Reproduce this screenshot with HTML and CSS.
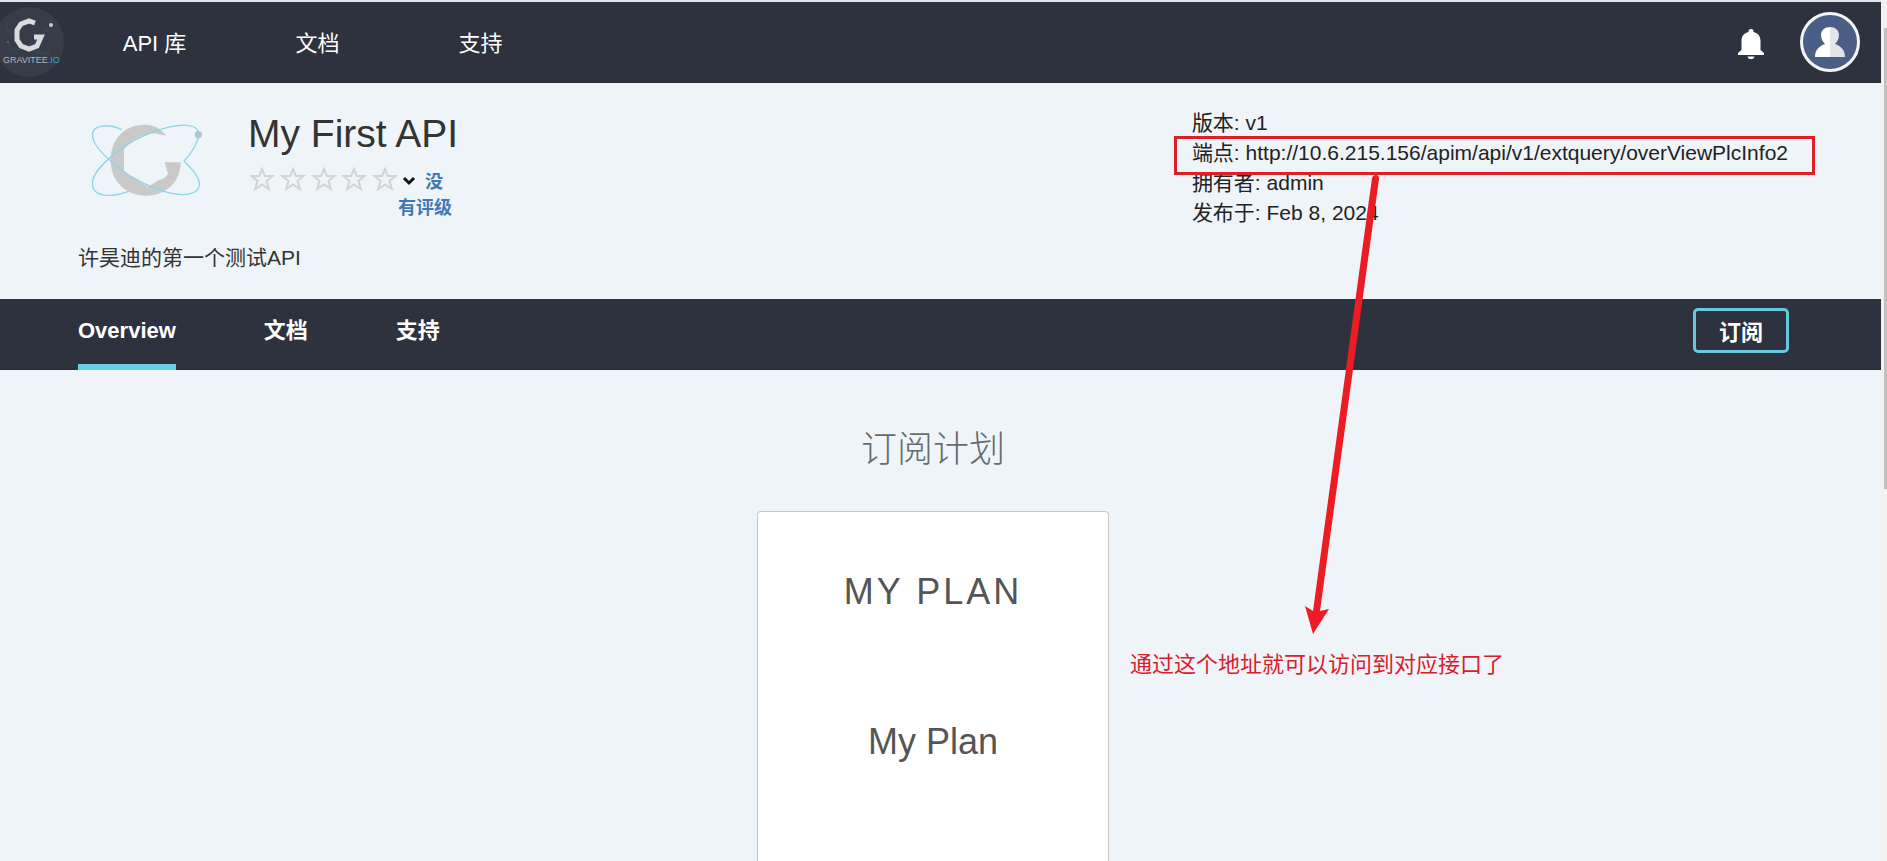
FILE: index.html
```html
<!DOCTYPE html>
<html lang="zh-CN">
<head>
    <meta charset="UTF-8">
    <meta name="viewport" content="width=device-width, initial-scale=1.0">
    <title>My First API</title>
    <link rel="stylesheet" href="styles.css">
</head>
<body>
    <div class="page">
        <header class="topbar">
            <a href="#" class="brand" aria-label="Gravitee.io">
                <svg width="66" height="72" viewBox="0 0 66 72">
                    <circle cx="29" cy="36" r="35" fill="#373c48"/>
                    <path d="M9 16C2 16 8 27 20 36S48 52 49 43M49 14C56 18 42 30 30 38S8 46 9 38" fill="none" stroke="#35525f"/>
                    <path d="M35 17L29 15L21 18L17 24V34L21 40L29 43L37 40L41 31H34" fill="none" stroke="#d9dbde" stroke-width="5"/>
                    <circle cx="51" cy="19" r="2" fill="#c9ccd1"/>
                    <circle cx="8" cy="36" r="1" fill="#4c7180"/>
                    <text class="brand-text" x="3" y="57">GRAVITEE<tspan class="brand-io">.IO</tspan></text>
                </svg>
            </a>
            <nav class="main-nav">
                <a href="#">API 库</a>
                <a href="#">文档</a>
                <a href="#">支持</a>
            </nav>
            <div class="user-tools">
                <button class="icon-button" aria-label="通知">
                    <svg width="26" height="30" viewBox="0 0 26 30" fill="#fff">
                        <path d="M13 0C11 0 10.500 1 10.500 3C6 4 3.500 7 3.500 12V21L0 24V26H26V24L22.500 21V12C22.500 7 20 4 15.500 3C15.500 1 15 0 13 0Z"/>
                        <path d="M9.500 27.500H16.500C16 29.500 15 30 13 30S10 29.500 9.500 27.500Z"/>
                    </svg>
                </button>
                <button class="icon-button" aria-label="用户">
                    <svg width="60" height="60" viewBox="0 0 60 60">
                        <circle cx="30" cy="30" r="28.500" fill="#4b5f86" stroke="#f3f5f8" stroke-width="3"/>
                        <path d="M30 15C25 15 21 18 21 23C21 27 23 30 25 32C19 34 15 38 15 45H30Z" fill="#fff"/>
                        <path d="M30 15C35 15 39 18 39 23C39 27 37 30 35 32C41 34 45 38 45 45H30Z" fill="#e3e5e8"/>
                    </svg>
                </button>
            </div>
        </header>

        <section class="api-header">
            <div class="api-intro">
                <div class="api-summary">
                    <svg class="api-logo" width="113" height="75" viewBox="90 70 339 225">
                        <path d="M318 108C302 85 282 75 255 75C190 75 152 122 152 182C152 243 195 288 258 288C320 288 362 245 362 188H314L324 222Q318 236 298 240L264 261L192 218V148C210 125 245 103 285 101Z" fill="#c9c9c9"/>
                        <circle cx="415" cy="105" r="11" fill="#bfc3c6"/>
                        <path d="M205 275C150 296 92 292 98 245C103 205 190 132 260 105C330 74 402 65 415 95C424 115 392 165 372 184" fill="none" stroke="#8ad6ea" stroke-width="4"/>
                        <path d="M185 90C145 70 92 75 98 112C103 150 190 225 260 255C320 285 402 300 417 262C425 235 390 202 372 184" fill="none" stroke="#8ad6ea" stroke-width="4"/>
                    </svg>
                    <div>
                        <h1>My First API</h1>
                        <div class="rating">
                            <svg width="148" height="25" viewBox="0 0 148 25" fill="none" stroke="#d3d3d3" stroke-width="2">
                                <defs>
                                    <path id="star" d="M12 2L14.800 9H22.500L16.500 14L18.800 22L12 17.500L5.200 22L7.500 14L1.500 9H9.200Z"/>
                                </defs>
                                <use href="#star"/>
                                <use href="#star" x="31"/>
                                <use href="#star" x="62"/>
                                <use href="#star" x="92"/>
                                <use href="#star" x="123"/>
                            </svg>
                            <a href="#" class="rating-link">
                                <svg class="chevron" width="22" height="16" viewBox="0 0 22 16"><path d="M6 3L11 8L16 3" fill="none" stroke="#111" stroke-width="3"/></svg>
                                没有评级
                            </a>
                        </div>
                    </div>
                </div>
                <p class="description">许昊迪的第一个测试API</p>
            </div>

            <div class="api-info">
                <div>版本: v1</div>
                <div>端点: http://10.6.215.156/apim/api/v1/extquery/overViewPlcInfo2</div>
                <div>拥有者: admin</div>
                <div>发布于: Feb 8, 2024</div>

                <!-- 标注 -->
                <div class="mark-box"></div>
                <svg class="mark-arrow" width="80" height="464" viewBox="0 0 80 464">
                    <path d="M72 5Q73 2 76 2T79 6L20 438L29 436L13 461L5 433L13 438Z" fill="#ec1c24"/>
                </svg>
                <div class="mark-note">通过这个地址就可以访问到对应接口了</div>
            </div>
        </section>

        <div class="tabs">
            <nav class="tab-list">
                <a href="#" class="active">Overview</a>
                <a href="#">文档</a>
                <a href="#">支持</a>
            </nav>
            <button class="subscribe">订阅</button>
        </div>

        <main class="plans">
            <h2>订阅计划</h2>
            <div class="plan-card">
                <h3>My Plan</h3>
                <p>My Plan</p>
            </div>
        </main>
    </div>
    <div class="scrollbar"><div class="thumb"></div></div>
</body>
</html>
```
FILE: styles.css
```css
* {
    box-sizing: border-box;
}

body {
    margin: 0;
    height: 100vh;
    display: flex;
    overflow: hidden;
    font-family: "Liberation Sans", "Noto Sans CJK SC", sans-serif;
    font-size: 21px;
    color: #333;
    background: #eff4f9;
}

h1, h2, h3, p {
    margin: 0;
    font-weight: normal;
}

a {
    text-decoration: none;
}

button {
    font-family: inherit;
    cursor: pointer;
}

svg {
    flex: none;
}

.page {
    flex: 1;
    display: flex;
    flex-direction: column;
    border-top: 2px solid #e3e6ea;
}

/* 顶部导航 */
.topbar {
    flex: none;
    height: 81px;
    padding-bottom: 2px;
    display: flex;
    align-items: center;
    background: #2d323e;
}

.brand {
    width: 73px;
}

.brand svg {
    display: block;
}

.brand-text {
    font-size: 9px;
    fill: #b4b7bd;
}

.brand-io {
    fill: #3aa7c4;
}

.main-nav {
    display: flex;
    padding-bottom: 2px;
}

.main-nav a {
    width: 163px;
    text-align: center;
    font-size: 22px;
    color: #fff;
}

.user-tools {
    margin-left: auto;
    padding-right: 21px;
    display: flex;
    align-items: center;
    gap: 36px;
}

.icon-button {
    padding: 0;
    border: none;
    background: none;
    display: flex;
}

.icon-button:first-child {
    padding-top: 4px;
}

/* API 信息 */
.api-header {
    flex: none;
    height: 216px;
    padding: 25px 93px 0 78px;
    display: flex;
    justify-content: space-between;
}

.api-summary {
    display: flex;
    height: 120px;
}

.api-logo {
    margin: 15px 45px 0 12px;
}

h1 {
    font-size: 39px;
    line-height: 52px;
}

.rating {
    display: flex;
    padding: 7px 0 0 2px;
}

.rating-link {
    width: 60px;
    margin-top: 2px;
    font-size: 18px;
    font-weight: bold;
    line-height: 26px;
    color: #3f78b8;
}

.chevron {
    vertical-align: middle;
}

.description {
    margin-top: 15px;
    line-height: 30px;
}

.api-info {
    position: relative;
    line-height: 30px;
    color: #222;
    white-space: nowrap;
}

.mark-box {
    position: absolute;
    top: 28px;
    left: -18px;
    right: -27px;
    height: 39px;
    border: 3px solid #dd1f2a;
}

.mark-arrow {
    position: absolute;
    top: 65px;
    left: 108px;
}

.mark-note {
    position: absolute;
    top: 542px;
    left: -62px;
    font-size: 22px;
    color: #d9202a;
}

/* 标签栏 */
.tabs {
    flex: none;
    height: 71px;
    padding: 0 92px 0 78px;
    display: flex;
    justify-content: space-between;
    background: #2d323e;
}

.tab-list {
    display: flex;
    gap: 88px;
}

.tab-list a {
    height: 71px;
    line-height: 64px;
    font-size: 22px;
    font-weight: bold;
    color: #fff;
}

.tab-list .active {
    border-bottom: 6px solid #66d0e6;
}

.subscribe {
    width: 96px;
    height: 45px;
    margin-top: 9px;
    padding: 0 0 2px;
    border: 3px solid #66c8dc;
    border-radius: 5px;
    background: none;
    color: #fff;
    font-size: 22px;
    font-weight: bold;
}

/* 订阅计划 */
.plans {
    flex: 1;
    padding: 53px 93px 0 78px;
    display: flex;
    flex-direction: column;
    align-items: center;
    color: #555;
}

h2 {
    font-size: 36px;
    font-weight: 300;
    line-height: 54px;
    color: #666b70;
}

.plan-card {
    flex: 1;
    width: 352px;
    margin-top: 34px;
    padding-top: 60px;
    border: 1px solid #c6c9cc;
    border-bottom: none;
    border-radius: 4px 4px 0 0;
    background: #fff;
    text-align: center;
    font-size: 36px;
    line-height: 40px;
}

h3 {
    margin-bottom: 110px;
    font-size: 36px;
    letter-spacing: 3px;
    text-transform: uppercase;
}

/* 滚动条 */
.scrollbar {
    width: 6px;
    padding: 28px 0 0 3px;
    background: #f1f1f1;
}

.thumb {
    height: 461px;
    background: #c1c1c1;
}
```
